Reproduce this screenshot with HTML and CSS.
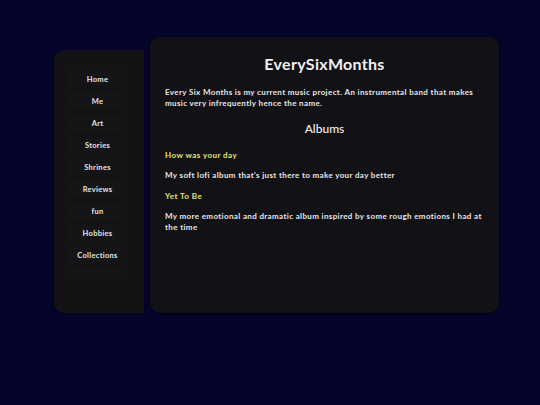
FILE: index.html
```html
<!DOCTYPE html>
<html>
<head>
<meta charset="utf-8">
<link rel="stylesheet" href="styles.css">
</head>
<body>
<div class="page">
  <aside class="sidebar">
    <nav class="nav">
      <a class="nav-item">Home</a>
      <a class="nav-item">Me</a>
      <a class="nav-item">Art</a>
      <a class="nav-item">Stories</a>
      <a class="nav-item">Shrines</a>
      <a class="nav-item">Reviews</a>
      <a class="nav-item">fun</a>
      <a class="nav-item">Hobbies</a>
      <a class="nav-item">Collections</a>
      <a class="nav-item">Guestbook</a>
    </nav>
  </aside>
  <main class="main">
    <h1 class="title">EverySixMonths</h1>
    <p class="text">Every Six Months is my current music project. An instrumental band that makes music very infrequently hence the name.</p>
    <h2 class="subtitle">Albums</h2>
    <h3 class="album">How was your day</h3>
    <p class="text">My soft lofi album that's just there to make your day better</p>
    <h3 class="album">Yet To Be</h3>
    <p class="text">My more emotional and dramatic album inspired by some rough emotions I had at the time</p>
  </main>
</div>
</body>
</html>
```
FILE: styles.css
```css
html, body {
  margin: 0;
  padding: 0;
  background: #05042a;
  width: 540px;
  height: 405px;
  overflow: hidden;
  font-family: Lato, "Noto Sans", sans-serif;
  color: #e6e6e8;
}
.page {
  display: flex;
  align-items: flex-start;
  gap: 6px;
  padding: 37px 0 0 54px;
}
.sidebar {
  margin-top: 13px;
  width: 90px;
  height: 263px;
  background: #131316;
  border-radius: 10px 0 0 10px;
  box-shadow: 0 1px 3px rgba(0,0,0,0.5);
  padding: 21px 0 0 14px;
  box-sizing: border-box;
}
.nav {
  width: 59px;
  height: 203px;
  overflow: hidden;
  display: flex;
  flex-direction: column;
  gap: 6px;
}
.nav-item {
  display: flex;
  flex: none;
  height: 16px;
  align-items: center;
  justify-content: center;
  background: #151517;
  font-size: 7.5px;
  font-weight: 700;
  color: #e4e4e6;
  letter-spacing: 0.3px;
}
.main {
  width: 349px;
  height: 276px;
  box-sizing: border-box;
  background: #121216;
  border-radius: 10px;
  box-shadow: 0 1px 3px rgba(0,0,0,0.5);
  padding: 17px 15px 0 15px;
}
.title {
  margin: 0;
  text-align: center;
  font-size: 16px;
  line-height: 20px;
  font-weight: 700;
  letter-spacing: 0.3px;
  color: #f0f0f2;
}
.text {
  margin: 0;
  font-size: 8px;
  line-height: 11px;
  letter-spacing: 0.36px;
  font-weight: 700;
}
.title + .text { margin-top: 13px; }
.subtitle {
  margin: 12px 0 0;
  text-align: center;
  font-size: 12px;
  line-height: 16px;
  font-weight: 500;
  color: #eeeef0;
}
.album {
  margin: 10px 0 0;
  font-size: 8px;
  line-height: 11px;
  font-weight: 700;
  letter-spacing: 0.45px;
  color: #e3e27a;
}
.subtitle + .album { margin-top: 13px; }
.album + .text { margin-top: 9px; }
```
